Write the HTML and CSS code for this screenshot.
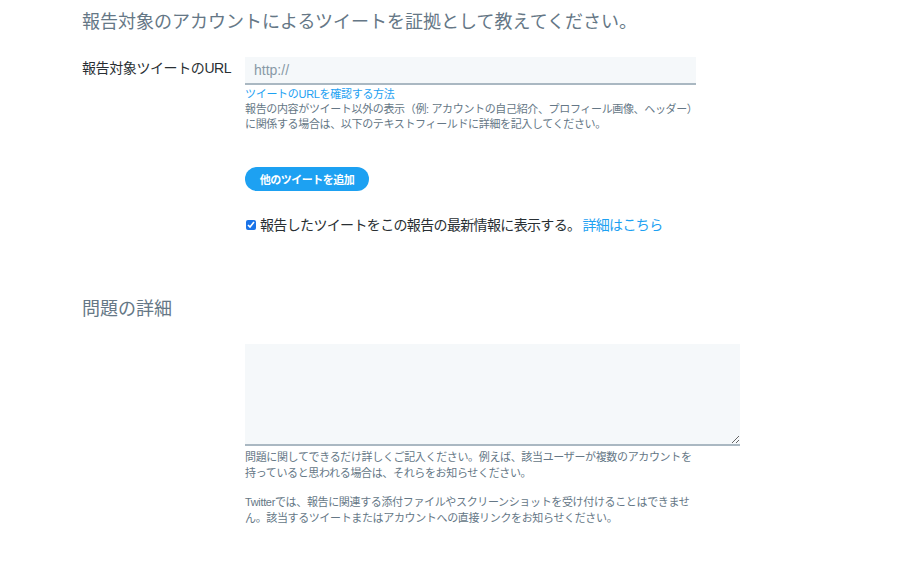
FILE: index.html
```html
<!DOCTYPE html>
<html lang="ja">
  <head>
    <meta charset="UTF-8" />
    <meta name="viewport" content="width=device-width, initial-scale=1.0" />
    <title>報告</title>
    <link rel="stylesheet" href="styles.css">
  </head>
  <body>
    <form class="report" autocomplete="off">
      <h2 class="title">報告対象のアカウントによるツイートを証拠として教えてください。</h2>
      <div class="row">
        <label class="label" for="url">報告対象ツイートのURL</label>
        <div class="field">
          <input type="text" id="url" class="url" placeholder="http://" />
          <a class="help-link" href="javascript:">ツイートのURLを確認する方法</a>
          <p class="help">報告の内容がツイート以外の表示（例: アカウントの自己紹介、プロフィール画像、ヘッダー）に関係する場合は、以下のテキストフィールドに詳細を記入してください。</p>
          <button type="button" class="add">他のツイートを追加</button>
          <label class="check">
            <input type="checkbox" checked />
            <span>報告したツイートをこの報告の最新情報に表示する。<a href="javascript:">詳細はこちら</a></span>
          </label>
        </div>
      </div>

      <h2 class="title title-detail">問題の詳細</h2>
      <div class="row">
        <div></div>
        <div class="field">
          <textarea class="detail"></textarea>
          <p class="help note">問題に関してできるだけ詳しくご記入ください。例えば、該当ユーザーが複数のアカウントを持っていると思われる場合は、それらをお知らせください。</p>
          <p class="help note second">Twitterでは、報告に関連する添付ファイルやスクリーンショットを受け付けることはできません。該当するツイートまたはアカウントへの直接リンクをお知らせください。</p>
        </div>
      </div>
    </form>
  </body>
</html>
```

FILE: styles.css
```css
* {
  margin: 0;
  padding: 0;
  box-sizing: border-box;
}
body {
  font-family: "Liberation Sans", "Noto Sans CJK JP", sans-serif;
  color: #14171a;
  background: #fff;
}
.report {
  padding: 10px 0 0 82px;
}
.title {
  font-size: 18px;
  line-height: 24px;
  font-weight: normal;
  color: #657786;
  margin-bottom: 23px;
}
.title-detail {
  margin-top: 62px;
}
.row {
  display: grid;
  grid-template-columns: 163px 1fr;
}
.label {
  font-size: 14px;
  line-height: 20px;
  letter-spacing: -0.4px;
  padding-top: 1px;
  color: #292f33;
}
.field {
  display: flex;
  flex-direction: column;
  align-items: flex-start;
}
.url {
  width: 451px;
  height: 28px;
  border: 0;
  border-bottom: 2px solid #aab8c2;
  background: #f5f8fa;
  padding: 0 9px;
  font-family: inherit;
  font-size: 14px;
  color: #14171a;
  outline: none;
}
.url::placeholder {
  color: #8899a6;
}
.help-link {
  margin-top: 2px;
  font-size: 11px;
  line-height: 15px;
  letter-spacing: -0.3px;
  color: #1da1f2;
  text-decoration: none;
}
.help {
  width: 450px;
  font-size: 11px;
  line-height: 15px;
  letter-spacing: -0.35px;
  color: #657786;
}
.add {
  margin-top: 35px;
  width: 124px;
  height: 24px;
  border: 0;
  border-radius: 12px;
  background: #1da1f2;
  color: #fff;
  font-family: inherit;
  font-size: 11px;
  font-weight: bold;
  letter-spacing: -0.5px;
  cursor: pointer;
}
.check {
  margin-top: 24px;
  display: flex;
  align-items: center;
  font-size: 14px;
  line-height: 20px;
  letter-spacing: -0.65px;
  color: #292f33;
}
.check input {
  width: 10px;
  height: 10px;
  margin: 0 4px 0 1px;
  accent-color: #1a73e8;
}
.check a {
  margin-left: 2px;
  color: #1da1f2;
  text-decoration: none;
}
.detail {
  width: 495px;
  height: 102px;
  border: 0;
  border-bottom: 2px solid #aab8c2;
  background: #f5f8fa;
  outline: none;
  font-family: inherit;
  font-size: 14px;
  padding: 8px;
}
.note {
  margin-top: 3px;
  line-height: 16px;
}
.note.second {
  margin-top: 13px;
}
```
